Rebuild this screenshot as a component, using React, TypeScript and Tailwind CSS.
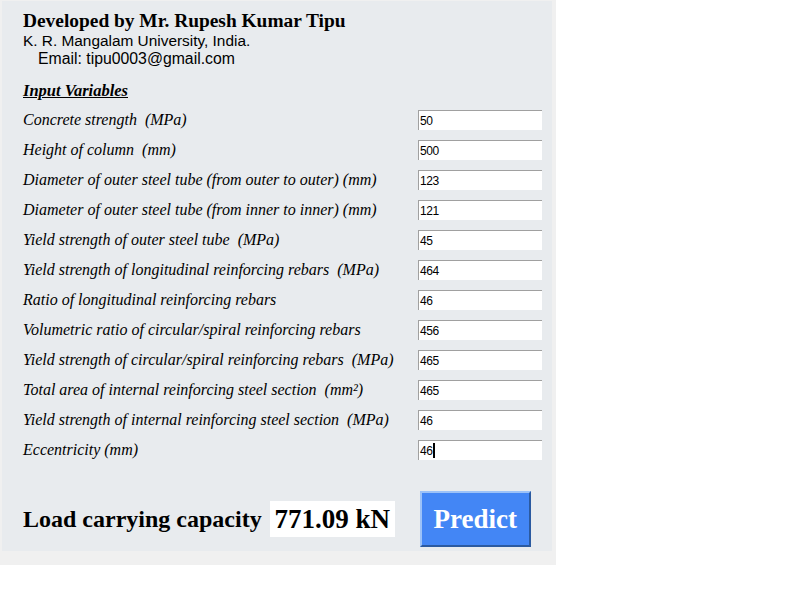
import React from "react";

const fields: [string, string][] = [
  ["Concrete strength  (MPa)", "50"],
  ["Height of column  (mm)", "500"],
  ["Diameter of outer steel tube (from outer to outer) (mm)", "123"],
  ["Diameter of outer steel tube (from inner to inner) (mm)", "121"],
  ["Yield strength of outer steel tube  (MPa)", "45"],
  ["Yield strength of longitudinal reinforcing rebars  (MPa)", "464"],
  ["Ratio of longitudinal reinforcing rebars", "46"],
  ["Volumetric ratio of circular/spiral reinforcing rebars", "456"],
  ["Yield strength of circular/spiral reinforcing rebars  (MPa)", "465"],
  ["Total area of internal reinforcing steel section  (mm\u00b2)", "465"],
  ["Yield strength of internal reinforcing steel section  (MPa)", "46"],
  ["Eccentricity (mm)", "46"],
];

const serif = "font-['Liberation_Serif','Times_New_Roman',serif]";

export default function App() {
  return (
    <div className="w-[556px] h-[565px] bg-[#f0f0f0] pt-[1px]">
      <div className="ml-[2px] w-[550px] h-[550px] bg-[#e8ebee] pt-[9px] pl-[21px]">
        {/* Author block */}
        <div className={`${serif} text-[19.4px] leading-[21px] font-bold text-black`}>
          Developed by Mr. Rupesh Kumar Tipu
        </div>
        <div className="font-['Liberation_Sans',Arial,sans-serif] leading-[18px] text-black">
          <div className="mt-[1px] text-[15.4px]">K. R. Mangalam University, India.</div>
          <div className="pl-[15px] text-[15.8px]">Email: tipu0003@gmail.com</div>
        </div>

        <div className={`${serif} mt-[13px] text-[16.5px] leading-[19px] font-bold italic underline text-black`}>
          Input Variables
        </div>

        {/* Input rows */}
        <div className="mt-[5px]">
          {fields.map(([label, value], i) => (
            <div key={i} className="flex items-center h-[30px]">
              <span className={`${serif} italic text-[16px] text-black whitespace-pre`}>{label}</span>
              <div className="ml-auto mr-[10px] w-[124px] h-[20px] bg-white border-t border-l border-[#a0a0a0] flex items-center pl-[1px] font-['Liberation_Sans',Arial,sans-serif] text-[12px] tracking-[-0.4px] text-black">
                {value}
                {i === fields.length - 1 && <span className="w-[2px] h-[15px] bg-black" />}
              </div>
            </div>
          ))}
        </div>

        {/* Result */}
        <div className="flex items-center mt-[26px]">
          <span className={`${serif} text-[24px] font-bold text-black`}>Load carrying capacity</span>
          <div className={`${serif} ml-[8px] w-[125px] h-[36px] bg-white flex items-center justify-center text-[27px] font-bold text-black`}>
            771.09 kN
          </div>
          <button
            className={`${serif} ml-[25px] w-[111px] h-[56px] bg-[#4386f5] border-2 border-t-[#9cc2f8] border-l-[#9cc2f8] border-r-[#2b5aa0] border-b-[#2b5aa0] text-white text-[27px] font-bold`}
          >
            Predict
          </button>
        </div>
      </div>
    </div>
  );
}
